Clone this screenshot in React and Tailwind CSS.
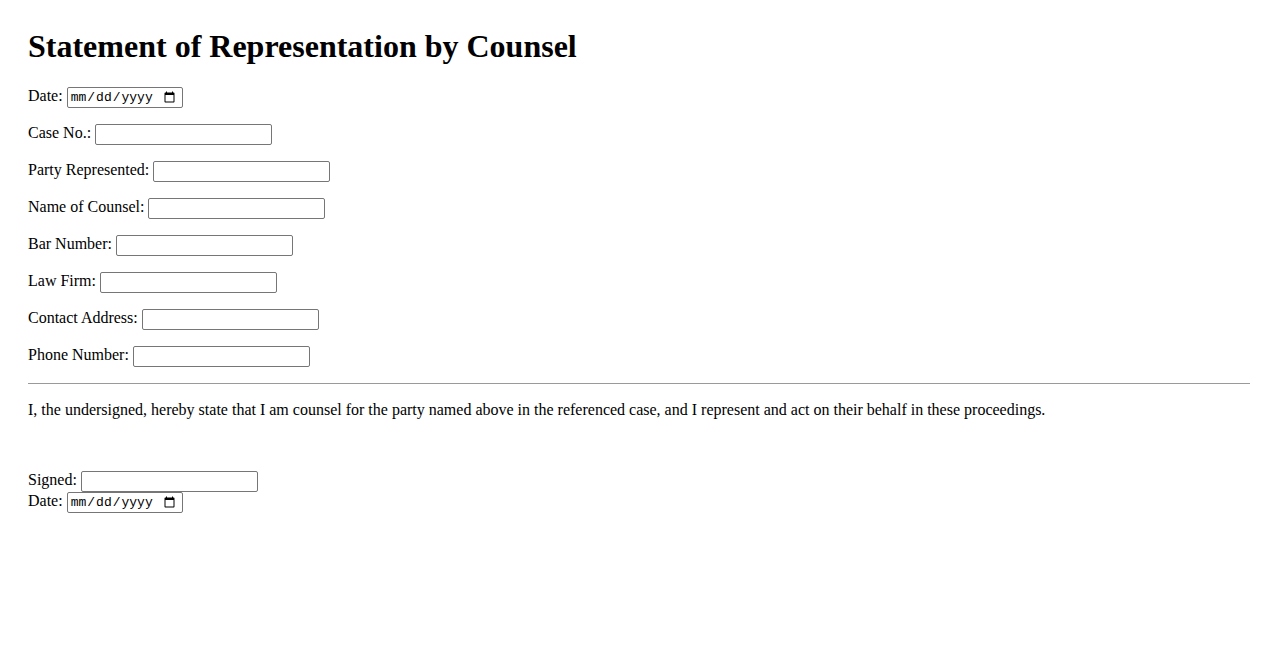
export default function App() {
  const fields = [
    ["Case No.:"],
    ["Party Represented:"],
    ["Name of Counsel:"],
    ["Bar Number:"],
    ["Law Firm:"],
    ["Contact Address:"],
    ["Phone Number:"],
  ];
  const serif = { fontFamily: '"Liberation Serif", "Times New Roman", serif' };
  const textInput =
    "w-[177px] h-[21px] border border-[#767676] rounded-[2px] bg-white px-[2px] text-[13px] outline-none";
  const dateInput =
    "w-[116px] h-[21px] border border-[#767676] rounded-[2px] bg-white pl-[2px] pr-[4px] text-[13px] text-black outline-none [font-family:'Liberation_Mono',monospace]";
  return (
    <div className="min-h-screen bg-white text-black px-[28px] pt-[28px] text-[16px]" style={serif}>
      <h1 className="text-[32px] font-bold leading-[37px] m-0">Statement of Representation by Counsel</h1>
      <div className="mt-[19px] flex flex-col gap-[16px]">
        <div className="flex items-baseline gap-[4px] h-[21px]">
          <span>Date:</span>
          <input type="date" className={dateInput} />
        </div>
        {fields.map(([label]) => (
          <div key={label} className="flex items-baseline gap-[4px] h-[21px]">
            <span>{label}</span>
            <input type="text" className={textInput} />
          </div>
        ))}
      </div>
      <hr className="mt-[19px] border-0 border-t border-[#9a9a9a]" />
      <p className="mt-[17px] leading-[18px]">
        I, the undersigned, hereby state that I am counsel for the party named above in the referenced case, and I represent and act on their behalf in these proceedings.
      </p>
      <div className="mt-[49px] flex flex-col">
        <div className="flex items-baseline gap-[4px] h-[21px]">
          <span>Signed:</span>
          <input type="text" className={textInput} />
        </div>
        <div className="flex items-baseline gap-[4px] h-[21px]">
          <span>Date:</span>
          <input type="date" className={dateInput} />
        </div>
      </div>
    </div>
  );
}
